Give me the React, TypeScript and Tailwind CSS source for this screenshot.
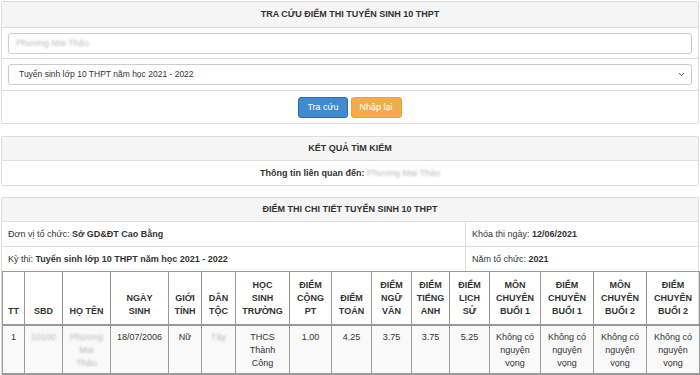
import { ChevronDown } from "lucide-react";

const cols: { label: string[]; w: number }[] = [
  { label: ["TT"], w: 22 },
  { label: ["SBD"], w: 38 },
  { label: ["HỌ TÊN"], w: 48 },
  { label: ["NGÀY", "SINH"], w: 58 },
  { label: ["GIỚI", "TÍNH"], w: 33 },
  { label: ["DÂN", "TỘC"], w: 34 },
  { label: ["HỌC", "SINH", "TRƯỜNG"], w: 54 },
  { label: ["ĐIỂM", "CỘNG", "PT"], w: 42 },
  { label: ["ĐIỂM", "TOÁN"], w: 40 },
  { label: ["ĐIỂM", "NGỮ", "VĂN"], w: 40 },
  { label: ["ĐIỂM", "TIẾNG", "ANH"], w: 38 },
  { label: ["ĐIỂM", "LỊCH", "SỬ"], w: 40 },
  { label: ["MÔN", "CHUYÊN", "BUỔI 1"], w: 51 },
  { label: ["ĐIỂM", "CHUYÊN", "BUỔI 1"], w: 53 },
  { label: ["MÔN", "CHUYÊN", "BUỔI 2"], w: 53 },
  { label: ["ĐIỂM", "CHUYÊN", "BUỔI 2"], w: 53 },
];

const Blur = ({ children }: { children: React.ReactNode }) => (
  <span className="text-[#b8b8b8] blur-[0.8px]">{children}</span>
);

const Heading = ({ children, h }: { children: React.ReactNode; h: string }) => (
  <div className={`${h} flex items-center justify-center bg-[#f5f5f5] border-b border-[#ddd] font-bold`}>
    {children}
  </div>
);

const NoChoice = () => (
  <>
    Không có
    <br />
    nguyện
    <br />
    vọng
  </>
);

export default function App() {
  const body: React.ReactNode[] = [
    "1",
    <Blur key="s">10100</Blur>,
    <Blur key="n">
      Phương
      <br />
      Mai
      <br />
      Thảo
    </Blur>,
    "18/07/2006",
    "Nữ",
    <Blur key="d">Tày</Blur>,
    <>
      THCS
      <br />
      Thành
      <br />
      Công
    </>,
    "1.00",
    "4.25",
    "3.75",
    "3.75",
    "5.25",
    <NoChoice key="a" />,
    <NoChoice key="b" />,
    <NoChoice key="c" />,
    <NoChoice key="d2" />,
  ];

  return (
    <div className="w-[700px] h-[375px] overflow-hidden bg-white px-px pt-px font-['Liberation_Sans',Arial,sans-serif] text-[9px] leading-[13px] text-[#333]">
      {/* search form */}
      <div className="border border-[#ddd] rounded-[2px]">
        <Heading h="h-[26px]">TRA CỨU ĐIỂM THI TUYỂN SINH 10 THPT</Heading>
        <div className="h-[31px] flex flex-col justify-center px-[6px] border-b border-[#ddd]">
          <div className="h-[21px] border border-[#ccc] rounded-[3px] flex items-center px-[7px]">
            <Blur>Phương Mai Thảo</Blur>
          </div>
        </div>
        <div className="h-[32px] flex flex-col justify-center px-[6px] border-b border-[#ddd]">
          <div className="h-[21px] border border-[#ccc] rounded-[3px] flex items-center pl-[10px] pr-[5px]">
            <span className="flex-1 text-[8.5px]">Tuyển sinh lớp 10 THPT năm học 2021 - 2022</span>
            <ChevronDown size={9} strokeWidth={2.5} className="text-[#555]" />
          </div>
        </div>
        <div className="h-[32px] flex items-center justify-center gap-[3px]">
          <button className="h-[21px] px-[8px] rounded-[3px] bg-[#3f8ad0] border border-[#2e6da4] text-white">
            Tra cứu
          </button>
          <button className="h-[21px] px-[8px] rounded-[3px] bg-[#f0ad4e] border border-[#eea236] text-white">
            Nhập lại
          </button>
        </div>
      </div>

      {/* result */}
      <div className="mt-[12px] border border-[#ddd] rounded-[2px]">
        <Heading h="h-[24px]">KẾT QUẢ TÌM KIẾM</Heading>
        <div className="h-[24px] flex items-center justify-center font-bold">
          Thông tin liên quan đến:&nbsp;
          <span className="font-normal">
            <Blur>Phương Mai Thảo</Blur>
          </span>
        </div>
      </div>

      {/* details */}
      <div className="mt-[11px] border border-[#ddd] border-b-0 rounded-t-[2px]">
        <Heading h="h-[24px]">ĐIỂM THI CHI TIẾT TUYỂN SINH 10 THPT</Heading>
        <div className="grid grid-cols-[464px_1fr]">
          <div className="h-[25px] flex items-center px-[6px] border-b border-r border-[#ddd]">
            Đơn vị tổ chức:&nbsp;<b>Sở GD&amp;ĐT Cao Bằng</b>
          </div>
          <div className="h-[25px] flex items-center px-[6px] border-b border-[#ddd]">
            Khóa thi ngày:&nbsp;<b>12/06/2021</b>
          </div>
          <div className="h-[24px] flex items-center px-[6px] border-r border-[#ddd]">
            Kỳ thi:&nbsp;<b>Tuyển sinh lớp 10 THPT năm học 2021 - 2022</b>
          </div>
          <div className="h-[24px] flex items-center px-[6px]">
            Năm tổ chức:&nbsp;<b>2021</b>
          </div>
        </div>
        <table className="w-full table-fixed border-collapse text-center">
          <colgroup>
            {cols.map((c, i) => (
              <col key={i} style={{ width: c.w }} />
            ))}
          </colgroup>
          <thead>
            <tr className="h-[53px]">
              {cols.map((c, i) => (
                <th
                  key={i}
                  className="align-bottom px-[2px] pb-[6px] border border-[#999] border-b-2 font-bold"
                >
                  {c.label.map((l, j) => (
                    <div key={j}>{l}</div>
                  ))}
                </th>
              ))}
            </tr>
          </thead>
          <tbody>
            <tr className="h-[49px] bg-[#f9f9f9]">
              {body.map((v, i) => (
                <td
                  key={i}
                  className="align-top px-[2px] pt-[5px] border border-[#999] border-b-2"
                >
                  {v}
                </td>
              ))}
            </tr>
          </tbody>
        </table>
      </div>
    </div>
  );
}
